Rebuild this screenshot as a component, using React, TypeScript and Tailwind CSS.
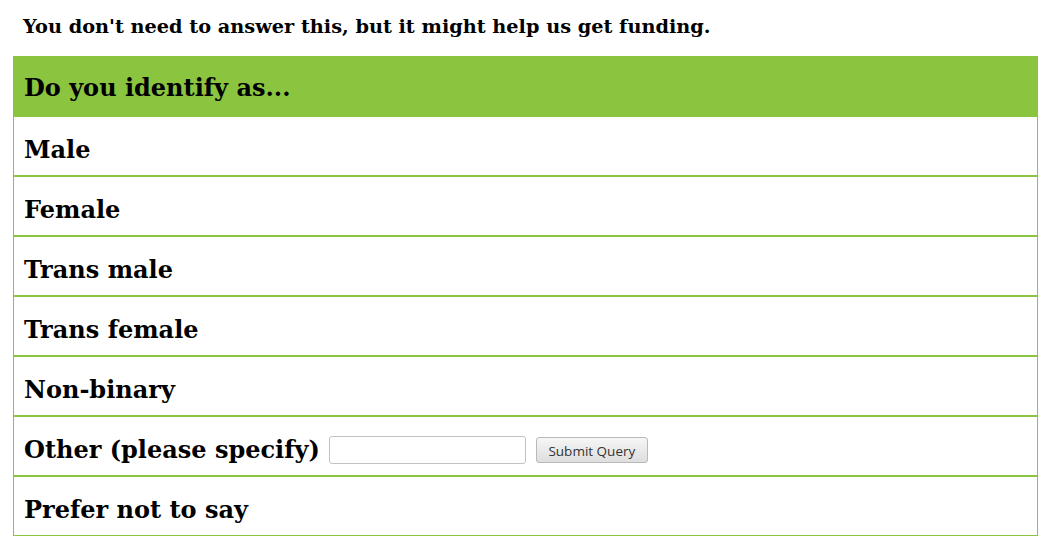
const options = [
  "Male",
  "Female",
  "Trans male",
  "Trans female",
  "Non-binary",
  "Other",
  "Prefer not to say",
];

function OtherRow() {
  return (
    <div className="flex items-center">
      <span>Other (please specify)</span>
      <input
        type="text"
        className="ml-[9px] h-[28px] w-[197px] rounded-[3px] border border-[#c2c2c2] bg-white outline-none"
      />
      <button
        type="button"
        className="ml-[10px] h-[26px] w-[112px] rounded-[3px] border border-[#b9b9b9] bg-gradient-to-b from-[#f6f6f6] to-[#dedede] pt-[3px] text-[13.5px] font-normal text-[#333] [font-family:'Open_Sans','DejaVu_Sans',sans-serif]"
      >
        Submit Query
      </button>
    </div>
  );
}

export default function App() {
  return (
    <div className="min-h-[550px] bg-white px-[13px] pt-[14px] text-black [font-family:'DejaVu_Serif',serif]">
      <p className="pl-[10px] text-[19.3px] font-bold leading-[26px]">
        You don't need to answer this, but it might help us get funding.
      </p>

      <div className="mt-[16px] w-[1025px] border-r border-b border-l border-[#8bc53f]">
        <div className="flex h-[61px] items-center bg-[#8bc53f] px-[10px] pt-[2px] text-[24px] font-bold">
          Do you identify as...
        </div>
        {options.map((opt, i) => (
          <div
            key={opt}
            className={
              "flex items-center px-[10px] pt-[7px] text-[24px] font-bold" +
              (i < options.length - 1 ? " h-[60px] border-b-2 border-[#8bc53f]" : " h-[58px]")
            }
          >
            {opt === "Other" ? <OtherRow /> : opt}
          </div>
        ))}
      </div>
    </div>
  );
}
